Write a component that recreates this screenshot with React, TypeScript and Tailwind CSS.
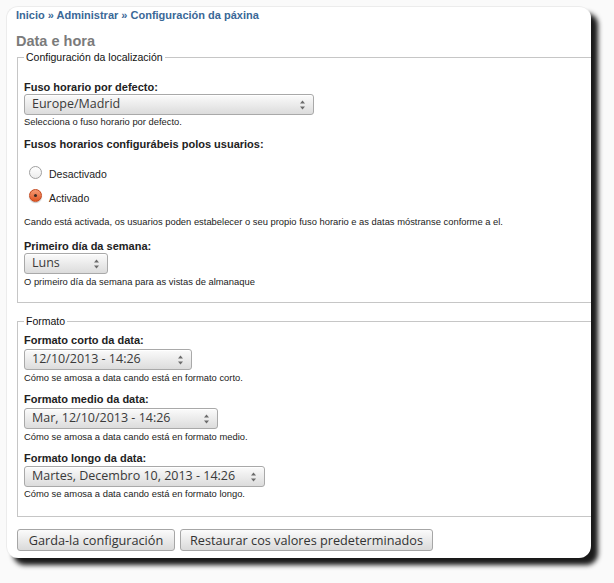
import React from 'react';

const label = "font-['Liberation_Sans',Arial,sans-serif] font-bold text-[11px] leading-[14px] text-[#222]";
const desc = "font-['Liberation_Sans',Arial,sans-serif] text-[9.4px] leading-[12px] text-[#222]";
const selectBox =
  "relative flex items-center h-[21px] rounded-[3px] border border-[#a9a9a9] bg-gradient-to-b from-[#fbfbfb] to-[#dcdcdc] pl-[7px] font-['Open_Sans',sans-serif] text-[12.5px] text-[#3a3a3a] shadow-[inset_0_1px_0_#fff]";
const button =
  "h-[22px] rounded-[3px] border border-[#a6a6a6] bg-gradient-to-b from-[#fbfbfb] to-[#dadada] text-center font-['Open_Sans',sans-serif] text-[12.7px] leading-[20px] text-[#333]";

function Arrows() {
  return (
    <svg width="7" height="12" viewBox="0 0 7 12" className="absolute right-[7px] top-1/2 -translate-y-1/2">
      <path d="M3.5 1.5 L6 4.5 L1 4.5 Z" fill="#6a6a6a" />
      <path d="M3.5 10.5 L6 7.5 L1 7.5 Z" fill="#6a6a6a" />
    </svg>
  );
}

function Select({ value, width, className }: { value: string; width: string; className?: string }) {
  return (
    <div className={`${selectBox} ${width} ${className ?? ''}`}>
      <span>{value}</span>
      <Arrows />
    </div>
  );
}

function Radio({ checked, text, className }: { checked?: boolean; text: string; className?: string }) {
  return (
    <div className={`flex items-center h-[16px] ${className ?? ''}`}>
      {checked ? (
        <span className="ml-[5px] flex items-center justify-center w-[13px] h-[13px] -mt-[6px] rounded-full border border-[#c4471c] bg-gradient-to-b from-[#f59a73] to-[#e0561f] shadow-[0_1px_1px_rgba(0,0,0,0.25)]">
          <span className="w-[3px] h-[3px] rounded-full bg-[#3a2a22]" />
        </span>
      ) : (
        <span className="ml-[5px] w-[13px] h-[13px] -mt-[3px] rounded-full border border-[#a0a0a0] bg-gradient-to-b from-[#ffffff] to-[#ececec]" />
      )}
      <span className="ml-[7px] font-['Liberation_Sans',Arial,sans-serif] text-[10.5px] leading-[14px] text-[#222]">{text}</span>
    </div>
  );
}

function Legend({ children }: { children: React.ReactNode }) {
  return (
    <legend className="px-[2px] font-['Liberation_Sans',Arial,sans-serif] text-[10.5px] leading-[14px] text-[#111]">
      {children}
    </legend>
  );
}

export default function App() {
  return (
    <div className="w-[614px] h-[583px] bg-[#fafafa] pt-[6px] pl-[6px]">
      <div className="w-[585px] h-[552px] rounded-[12px] bg-white overflow-hidden border-l border-t border-[#ececec] shadow-[7px_7px_5px_rgba(0,0,0,0.9)] pl-[9px] pt-[1px]">
        {/* breadcrumb */}
        <div className="font-['Liberation_Sans',Arial,sans-serif] font-bold text-[11px] leading-[14px] text-[#3a6897]">
          Inicio » Administrar » Configuración da páxina
        </div>
        <h1 className="mt-[11px] font-['Liberation_Sans',Arial,sans-serif] font-bold text-[14.5px] leading-[17px] text-[#7b7b7b]">
          Data e hora
        </h1>

        {/* Localization */}
        <fieldset className="ml-[1px] w-[600px] border border-[#c6c6c6] pl-[6px] pr-0 pb-[14px] pt-0">
          <Legend>Configuración da localización</Legend>
          <div className={`${label} mt-[16px]`}>Fuso horario por defecto:</div>
          <Select value="Europe/Madrid" width="w-[290px]" />
          <div className={`${desc} mt-[1px]`}>Selecciona o fuso horario por defecto.</div>
          <div className={`${label} mt-[9px]`}>Fusos horarios configurábeis polos usuarios:</div>
          <Radio text="Desactivado" className="mt-[15px]" />
          <Radio checked text="Activado" className="mt-[8px]" />
          <div className={`${desc} mt-[10px]`}>
            Cando está activada, os usuarios poden estabelecer o seu propio fuso horario e as datas móstranse conforme a el.
          </div>
          <div className={`${label} mt-[11px]`}>Primeiro día da semana:</div>
          <Select value="Luns" width="w-[84px]" />
          <div className={`${desc} mt-[2px]`}>O primeiro día da semana para as vistas de almanaque</div>
        </fieldset>

        {/* Formats */}
        <fieldset className="ml-[1px] mt-[11px] w-[600px] border border-[#c6c6c6] pl-[6px] pr-0 pb-[16px] pt-0">
          <Legend>Formato</Legend>
          <div className={`${label} mt-[5px]`}>Formato corto da data:</div>
          <Select value="12/10/2013 - 14:26" width="w-[168px]" className="mt-[2px]" />
          <div className={`${desc} mt-[2px]`}>Cómo se amosa a data cando está en formato corto.</div>
          <div className={`${label} mt-[8px]`}>Formato medio da data:</div>
          <Select value="Mar, 12/10/2013 - 14:26" width="w-[194px]" className="mt-[2px]" />
          <div className={`${desc} mt-[2px]`}>Cómo se amosa a data cando está en formato medio.</div>
          <div className={`${label} mt-[8px]`}>Formato longo da data:</div>
          <Select value="Martes, Decembro 10, 2013 - 14:26" width="w-[241px]" className="mt-[1px]" />
          <div className={`${desc} mt-[1px]`}>Cómo se amosa a data cando está en formato longo.</div>
        </fieldset>

        <div className="mt-[12px] ml-[1px] flex gap-[5px]">
          <button className={`${button} w-[158px]`}>Garda-la configuración</button>
          <button className={`${button} w-[253px]`}>Restaurar cos valores predeterminados</button>
        </div>
      </div>
    </div>
  );
}
